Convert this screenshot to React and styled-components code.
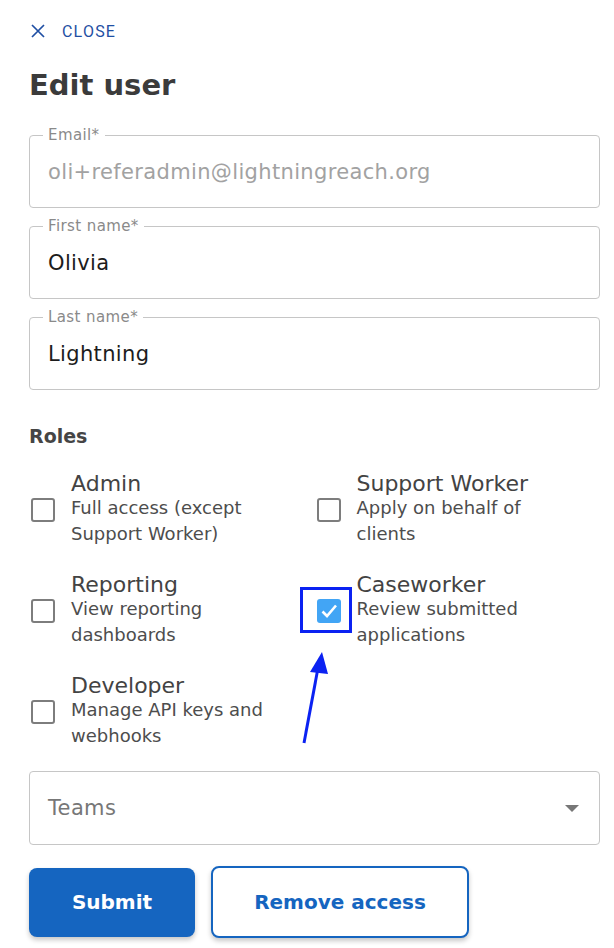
import React from 'react'
import styled, { createGlobalStyle } from 'styled-components'

const Global = createGlobalStyle`
  html, body { margin: 0; padding: 0; background: #fff; }
  * { box-sizing: border-box; }
`

const Page = styled.div`
  position: relative;
  width: 614px;
  min-height: 948px;
  padding: 19px 14px 0 29px;
  font-family: "DejaVu Sans", sans-serif;
  color: #444;
`

const CloseRow = styled.div`
  display: flex;
  align-items: center;
  gap: 17px;
  height: 24px;
  padding-left: 2px;
  color: #1f4fa3;
  font-family: Roboto, sans-serif;
  font-size: 16px;
  letter-spacing: 1.2px;
`

const Title = styled.h1`
  margin: 24px 0 0;
  font-size: 29px;
  line-height: 36px;
  font-weight: bold;
  color: #3b3b3b;
`

const Fields = styled.div`
  display: flex;
  flex-direction: column;
  gap: 9px;
  margin-top: 23px;
`

const Field = styled.fieldset`
  margin: 0;
  min-width: 0;
  padding: 0 0 0 18px;
  height: 82px;
  border: 1px solid #c6c6c6;
  border-radius: 4px;
`

const Legend = styled.legend`
  margin-left: -5px;
  padding: 0 5px;
  font-size: 15px;
  line-height: 18px;
  letter-spacing: 0.4px;
  color: #8a8a8a;
`

const Value = styled.div`
  padding-top: 15px;
  font-size: 21px;
  line-height: 26px;
  letter-spacing: 0.35px;
  color: ${p => (p.$disabled ? '#a2a2a2' : '#1c1c1c')};
`

const SectionLabel = styled.div`
  margin-top: 34px;
  font-size: 19px;
  line-height: 24px;
  font-weight: bold;
  color: #454545;
`

const RoleGrid = styled.div`
  display: grid;
  grid-template-columns: 1fr 1fr;
  row-gap: 27px;
  margin-top: 25px;
`

const Role = styled.div`
  display: flex;
  align-items: center;
  gap: 16px;
  padding-left: 2px;
`

const BoxWrap = styled.div`
  position: relative;
  flex: none;
  width: 24px;
  height: 24px;
`

const Box = styled.div`
  width: 24px;
  height: 24px;
  border-radius: 3px;
  border: ${p => (p.$checked ? 'none' : '2.6px solid #7d7d7d')};
  background: ${p => (p.$checked ? '#42a5f5' : '#fff')};
  display: flex;
  align-items: center;
  justify-content: center;
`

const Highlight = styled.div`
  position: absolute;
  left: -17px;
  top: -12px;
  width: 52px;
  height: 46px;
  border: 3.5px solid #0b22f2;
`

const RoleText = styled.div`
  max-width: 215px;
`

const RoleName = styled.div`
  font-size: 22px;
  line-height: 22px;
  color: #434343;
`

const RoleDesc = styled.div`
  font-size: 18px;
  line-height: 26px;
  color: #4d4d4d;
`

const Select = styled.div`
  display: flex;
  align-items: center;
  justify-content: space-between;
  height: 74px;
  margin-top: 22px;
  padding: 0 20px 0 18px;
  border: 1px solid #c6c6c6;
  border-radius: 4px;
  font-size: 21px;
  letter-spacing: 0.35px;
  color: #777;
`

const Caret = styled.div`
  width: 0;
  height: 0;
  border-left: 7px solid transparent;
  border-right: 7px solid transparent;
  border-top: 7px solid #777;
`

const Buttons = styled.div`
  display: flex;
  align-items: center;
  gap: 16px;
  margin-top: 21px;
`

const Button = styled.button`
  height: ${p => (p.$outline ? '72px' : '69px')};
  width: ${p => p.$w}px;
  border-radius: 8px;
  border: ${p => (p.$outline ? '2px solid #1565c0' : 'none')};
  background: ${p => (p.$outline ? '#fff' : '#1565c0')};
  color: ${p => (p.$outline ? '#1565c0' : '#fff')};
  font-family: "DejaVu Sans", sans-serif;
  font-size: 20px;
  font-weight: bold;
  box-shadow: 0 3px 5px rgba(0, 0, 0, 0.22);
  cursor: pointer;
`

const Arrow = styled.svg`
  position: absolute;
  left: 0;
  top: 0;
  pointer-events: none;
`

const roles = [
  { name: 'Admin', desc: 'Full access (except Support Worker)' },
  { name: 'Support Worker', desc: 'Apply on behalf of clients' },
  { name: 'Reporting', desc: 'View reporting dashboards' },
  { name: 'Caseworker', desc: 'Review submitted applications', checked: true },
  { name: 'Developer', desc: 'Manage API keys and webhooks' },
]

export default function App() {
  return (
    <Page>
      <Global />
      <CloseRow>
        <svg width="14" height="14" viewBox="0 0 14 14">
          <path d="M1 1 L13 13 M13 1 L1 13" stroke="#1f4fa3" strokeWidth="1.7" />
        </svg>
        CLOSE
      </CloseRow>
      <Title>Edit user</Title>

      <Fields>
        <Field>
          <Legend>Email*</Legend>
          <Value $disabled>oli+referadmin@lightningreach.org</Value>
        </Field>
        <Field>
          <Legend>First name*</Legend>
          <Value>Olivia</Value>
        </Field>
        <Field>
          <Legend>Last name*</Legend>
          <Value>Lightning</Value>
        </Field>
      </Fields>

      <SectionLabel>Roles</SectionLabel>
      <RoleGrid>
        {roles.map(r => (
          <Role key={r.name}>
            <BoxWrap>
              <Box $checked={r.checked}>
                {r.checked && (
                  <svg width="24" height="24" viewBox="0 0 24 24">
                    <path d="M5.5 12.5 L10 17 L19 6.5" fill="none" stroke="#fff" strokeWidth="2.6" />
                  </svg>
                )}
              </Box>
              {r.checked && <Highlight />}
            </BoxWrap>
            <RoleText>
              <RoleName>{r.name}</RoleName>
              <RoleDesc>{r.desc}</RoleDesc>
            </RoleText>
          </Role>
        ))}
      </RoleGrid>

      <Select>
        Teams
        <Caret />
      </Select>

      <Buttons>
        <Button $w={166}>Submit</Button>
        <Button $w={258} $outline>Remove access</Button>
      </Buttons>

      <Arrow width="614" height="948">
        <line x1="304" y1="743" x2="318" y2="668" stroke="#0b22f2" strokeWidth="3" />
        <polygon points="322,652 310,672 328,674" fill="#0b22f2" />
      </Arrow>
    </Page>
  )
}
